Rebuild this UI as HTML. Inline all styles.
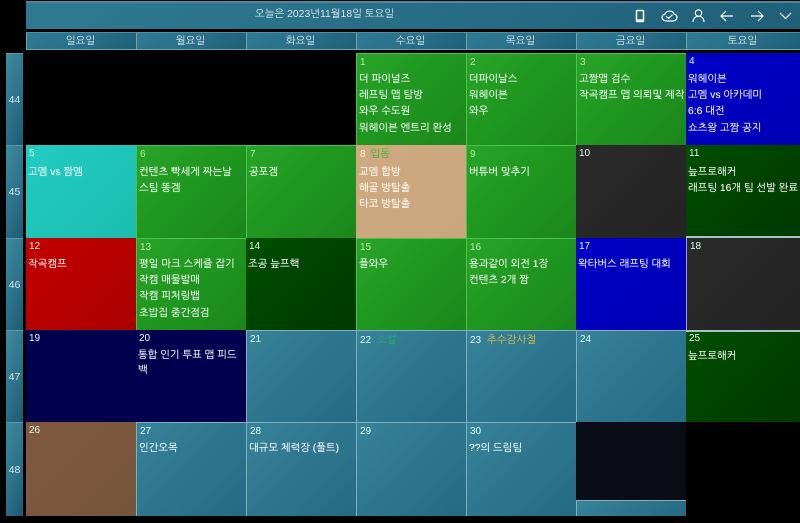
<!DOCTYPE html>
<html lang="ko"><head><meta charset="utf-8"><title>캘린더</title>
<style>
html,body{margin:0;padding:0;background:#000;}
body{width:800px;height:523px;position:relative;overflow:hidden;font-family:"Liberation Sans","NanumGothic","Noto Sans CJK KR",sans-serif;color:#fff;font-size:10.3px;}
div{box-sizing:border-box;}
.a{position:absolute;}
.hd{position:absolute;top:32px;height:18px;text-align:center;line-height:17px;color:#d5e6ea;font-size:10.5px;padding-right:2px;border-left:1px solid #6fa5b3;border-top:1px solid #4d8ea0;border-bottom:1px solid #6fa5b3;background:linear-gradient(135deg,#2f7a93,#2a6f8a 50%,#1f5f78);}
.wk{position:absolute;left:6px;width:17px;text-align:center;color:#d5e6ea;font-size:10.5px;border-top:1px solid #5e98a8;background:linear-gradient(110deg,#3d8a9e,#2a7088 60%,#1d5a72);}
.c{position:absolute;padding:1px 0 0 2px;white-space:nowrap;overflow:hidden;text-shadow:0 0 1px rgba(255,255,255,.35);}
.c b{display:block;font-weight:normal;height:16px;line-height:16px;padding-left:1px;font-size:10px;color:#dfe;text-shadow:none;}
.c p{margin:0;height:16.2px;line-height:16px;}
.c b+p{margin-top:2px;}
.g{background:linear-gradient(135deg,#28a428 0%,#1f961f 50%,#1c861c 100%);border-left:1px solid #4cc24c;border-top:1px solid #4cc24c;}
.g b{color:#b5f0a5;}
.g b+p,.t b+p{margin-top:1px;}
.c.r2 b+p{margin-top:3px;}
.c.g.r2 b+p{margin-top:2px;}
.t{background:linear-gradient(135deg,#37839a 0%,#2f7890 40%,#266a85 100%);border-left:1px solid #7fb0bd;border-top:1px solid #7fb0bd;}
.dg{background:linear-gradient(135deg,#004f00,#004000 60%,#003a00);}
.dk{background:linear-gradient(135deg,#2a2a2a,#232323);}
.bl{background:linear-gradient(135deg,#0000c8,#0000b4);}
.nv{background:#00004e;}
</style></head><body>

<!-- top bar -->
<div class="a" style="left:26px;top:1px;width:774px;height:28px;border-top:2px solid #4a8a9c;background:linear-gradient(135deg,#2f7a93,#2a7089 40%,#1f5f78);"></div>
<div class="a" style="left:26px;top:1px;width:597px;height:28px;text-align:center;line-height:28px;color:#d8e8ec;font-size:10.400px;">오늘은 2023년11월18일 토요일</div>

<svg class="a" style="left:630px;top:5px" width="170" height="22" viewBox="0 0 170 22" fill="none" stroke="#fff" stroke-width="1.2">
<rect x="6.500" y="5.500" width="7" height="11" rx=".8" stroke-width="1.500"/><path d="M6.500 15.300h7" stroke-width="2"/>
<path d="M37 16c-3.200 0-5-1.700-5-3.600 0-1.700 1.300-3 3-3.300 .9-2 2.800-3.200 5-3 2 .1 3.700 1.300 4.200 3.100 1.800.3 2.800 1.600 2.800 3.200 0 2-1.700 3.600-4 3.600z"/><path d="M36 11.300l2.500 2 4-3.500"/>
<circle cx="68.500" cy="8" r="3.200"/><path d="M63 16.500c.3-3.300 2.500-5.200 5.500-5.200s5.200 1.900 5.500 5.200" stroke-linecap="round"/>
<path d="M103 11h-12M96 6l-5 5 5 5"/>
<path d="M121 11h12M128 6l5 5-5 5"/>
<path d="M150 8l5.500 5.500L161 8"/>
</svg>

<!-- day headers -->
<div class="hd" style="left:26px;width:110px;">일요일</div>
<div class="hd" style="left:136px;width:110px;">월요일</div>
<div class="hd" style="left:246px;width:110px;">화요일</div>
<div class="hd" style="left:356px;width:110px;">수요일</div>
<div class="hd" style="left:466px;width:110px;">목요일</div>
<div class="hd" style="left:576px;width:110px;">금요일</div>
<div class="hd" style="left:686px;width:114px;">토요일</div>

<!-- week numbers -->
<div class="wk" style="top:53px;height:92px;line-height:92px;">44</div>
<div class="wk" style="top:145px;height:93px;line-height:93px;">45</div>
<div class="wk" style="top:238px;height:92px;line-height:92px;">46</div>
<div class="wk" style="top:330px;height:92px;line-height:92px;">47</div>
<div class="wk" style="top:422px;height:94px;line-height:94px;">48</div>

<!-- row 1 -->
<div class="c g" style="left:356px;top:53px;width:110px;height:92px;"><b>1</b><p>더 파이널즈</p><p>레프팅 맵 탐방</p><p>와우 수도원</p><p>워헤이븐 엔트리 완성</p></div>
<div class="c g" style="left:466px;top:53px;width:110px;height:92px;"><b>2</b><p>더파이날스</p><p>워헤이븐</p><p>와우</p></div>
<div class="c g" style="left:576px;top:53px;width:110px;height:92px;"><b>3</b><p>고짬맵 검수</p><p>작곡캠프 맵 의뢰및 제작</p></div>
<div class="c bl" style="left:686px;top:53px;width:114px;height:92px;"><b>4</b><p>워헤이븐</p><p>고멤 vs 아카데미</p><p>6:6 대전</p><p>쇼츠왕 고짬 공지</p></div>

<!-- row 2 -->
<div class="c r2" style="left:26px;top:145px;width:110px;height:93px;background:linear-gradient(135deg,#22ccc0,#1cbdb0);"><b>5</b><p>고멤 vs 짬멤</p></div>
<div class="c g r2" style="left:136px;top:145px;width:110px;height:93px;"><b>6</b><p>컨텐츠 빡세게 짜는날</p><p>스팀 똥겜</p></div>
<div class="c g r2" style="left:246px;top:145px;width:110px;height:93px;"><b>7</b><p>공포겜</p></div>
<div class="c r2" style="left:356px;top:145px;width:110px;height:93px;padding-left:3px;background:linear-gradient(135deg,#cfaa80,#c9a67e);"><b style="color:#fff0d0;">8 <span style="color:#3cb43c;margin-left:2px;font-size:10.500px;">입동</span></b><p>교멤 합방</p><p>해골 방탈출</p><p>타코 방탈출</p></div>
<div class="c g r2" style="left:466px;top:145px;width:110px;height:93px;"><b>9</b><p>버튜버 맞추기</p></div>
<div class="c dk" style="left:576px;top:145px;width:110px;height:93px;"><b>10</b></div>
<div class="c dg r2" style="left:686px;top:145px;width:114px;height:93px;"><b>11</b><p>늪프로해커</p><p>래프팅 16개 팀 선발 완료</p></div>

<!-- row 3 -->
<div class="c" style="left:26px;top:238px;width:110px;height:92px;background:linear-gradient(135deg,#c40000,#aa0000);"><b>12</b><p>작곡캠프</p></div>
<div class="c g" style="left:136px;top:238px;width:110px;height:92px;"><b>13</b><p>평일 마크 스케쥴 잡기</p><p>작캠 매물발매</p><p>작캠 피처링뱁</p><p>초밥집 중간점검</p></div>
<div class="c dg" style="left:246px;top:238px;width:110px;height:92px;"><b>14</b><p>조공 늪프핵</p></div>
<div class="c g" style="left:356px;top:238px;width:110px;height:92px;"><b>15</b><p>플와우</p></div>
<div class="c g" style="left:466px;top:238px;width:110px;height:92px;"><b>16</b><p>용과같이 외전 1장</p><p>컨텐츠 2개 짬</p></div>
<div class="c bl" style="left:576px;top:238px;width:110px;height:92px;"><b>17</b><p>왁타버스 래프팅 대회</p></div>
<div class="c dk" style="left:686px;top:238px;width:114px;height:92px;border-left:1px solid #8fa8d8;"><b>18</b></div>
<div class="a" style="left:686px;top:236px;width:114px;height:2px;background:#a9c4c4;"></div>

<!-- row 4 -->
<div class="c nv" style="left:26px;top:330px;width:110px;height:92px;"><b>19</b></div>
<div class="c nv" style="left:136px;top:330px;width:110px;height:92px;white-space:normal;"><b>20</b><p style="height:auto;line-height:14.500px;padding-right:4px;">통합 인기 투표 맵 피드백</p></div>
<div class="c t" style="left:246px;top:330px;width:110px;height:92px;"><b>21</b></div>
<div class="c t" style="left:356px;top:330px;width:110px;height:92px;"><b>22 <span style="color:#1fb45a;margin-left:3px;font-size:10.500px;">소설</span></b></div>
<div class="c t" style="left:466px;top:330px;width:110px;height:92px;"><b>23 <span style="color:#e0c040;margin-left:3px;font-size:10.500px;">추수감사절</span></b></div>
<div class="c t" style="left:576px;top:330px;width:110px;height:92px;"><b>24</b></div>
<div class="c dg" style="left:686px;top:330px;width:114px;height:92px;"><b>25</b><p>늪프로해커</p></div>
<div class="a" style="left:686px;top:330px;width:114px;height:2px;background:#a9c4c4;"></div>

<!-- row 5 -->
<div class="c" style="left:26px;top:422px;width:110px;height:94px;background:linear-gradient(135deg,#80593f,#75553c);"><b>26</b></div>
<div class="c t" style="left:136px;top:422px;width:110px;height:94px;"><b>27</b><p>인간오목</p></div>
<div class="c t" style="left:246px;top:422px;width:110px;height:94px;"><b>28</b><p>대규모 체력장 (풀트)</p></div>
<div class="c t" style="left:356px;top:422px;width:110px;height:94px;"><b>29</b></div>
<div class="c t" style="left:466px;top:422px;width:110px;height:94px;"><b>30</b><p>??의 드림팀</p></div>
<div class="a" style="left:576px;top:422px;width:110px;height:78px;background:#090c14;"></div>
<div class="a t" style="left:576px;top:500px;width:110px;height:16px;"></div>

</body></html>
